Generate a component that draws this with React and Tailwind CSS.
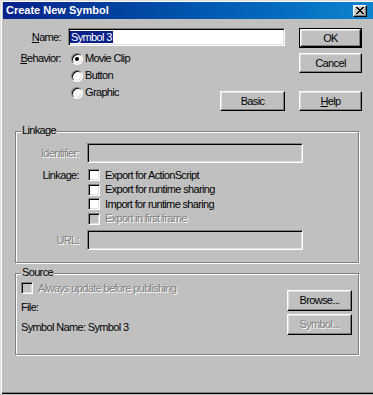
import React from "react";

const raised =
  "bg-[#c0c0c0] border border-t-white border-l-white border-r-black border-b-black shadow-[inset_-1px_-1px_#808080,inset_1px_1px_#dfdfdf]";
const sunken =
  "border border-t-[#808080] border-l-[#808080] border-r-white border-b-white shadow-[inset_1px_1px_#000,inset_-1px_-1px_#dfdfdf]";
const dis = "text-[#808080] [text-shadow:1px_1px_0_#fff]";

function Btn({ children, className = "", disabled, def }) {
  if (def) {
    return (
      <div className={`border border-black ${className}`}>
        <div className={`${raised} h-full flex items-center justify-center`}>{children}</div>
      </div>
    );
  }
  return (
    <div className={`${raised} flex items-center justify-center ${disabled ? dis : ""} ${className}`}>
      {children}
    </div>
  );
}

function Radio({ checked, label }) {
  return (
    <div className="flex items-center h-[17px]">
      <div className="w-[12px] h-[12px] rounded-full bg-white border border-t-[#808080] border-l-[#808080] border-r-white border-b-white shadow-[inset_1px_1px_#000,inset_-1px_-1px_#dfdfdf] flex items-center justify-center">
        {checked && <div className="w-[4px] h-[4px] rounded-full bg-black" />}
      </div>
      <span className="ml-[2px]">{label}</span>
    </div>
  );
}

function Check({ label, disabled, h = "h-[14.5px]" }) {
  return (
    <div className={`flex items-center ${h}`}>
      <div className={`w-[12px] h-[12px] ${sunken} ${disabled ? "bg-[#c0c0c0]" : "bg-white"}`} />
      <span className={`ml-[5px] ${disabled ? dis : ""}`}>{label}</span>
    </div>
  );
}

function Group({ title, className = "", children }) {
  return (
    <div
      className={`relative ml-[15px] w-[344px] border border-[#808080] shadow-[inset_1px_1px_#fff,1px_1px_#fff] ${className}`}
    >
      <span className="absolute left-[5px] top-[-8px] h-[13px] leading-[13px] px-[1px] bg-[#c0c0c0]">
        {title}
      </span>
      {children}
    </div>
  );
}

export default function App() {
  return (
    <div className="w-[373px] h-[395px] bg-[#c0c0c0] overflow-hidden text-[11px] leading-[13px] tracking-[-0.65px] text-black font-['Liberation_Sans',Arial,sans-serif]">
      <div className="h-[394px] pt-[2px] shadow-[inset_1px_1px_#dfdfdf,inset_2px_2px_#fff,inset_0_-1px_#000,inset_0_-2px_#808080]">
        {/* Title bar */}
        <div className="ml-[3px] h-[17px] flex items-center justify-between pl-[3px] pr-[6px] bg-gradient-to-r from-[#08218a] to-[#1084d0]">
          <span className="text-white font-bold text-[11px] tracking-normal">Create New Symbol</span>
          <div className={`${raised} w-[14px] h-[12px] flex items-center justify-center`}>
            <svg width="8" height="7" viewBox="0 0 8 7" shapeRendering="crispEdges">
              <path
                fill="#000"
                d="M0 0h2v1H0z M6 0h2v1H6z M1 1h2v1H1z M5 1h2v1H5z M2 2h4v1H2z M3 3h2v1H3z M2 4h4v1H2z M1 5h2v1H1z M5 5h2v1H5z M0 6h2v1H0z M6 6h2v1H6z"
              />
            </svg>
          </div>
        </div>

        {/* Top section */}
        <div className="flex mt-[9px]">
          <div className="w-[285px]">
            <div className="flex items-center h-[18px]">
              <div className="w-[61px] text-right">
                <span className="underline">N</span>ame:
              </div>
              <div className={`ml-[7px] w-[217px] h-[18px] bg-white ${sunken} flex items-center pl-[1px]`}>
                <span className="bg-[#08218a] text-white px-[1px] leading-[12px]">Symbol 3</span>
              </div>
            </div>
            <div className="flex items-start mt-[4px]">
              <div className="w-[61px] text-right h-[17px] leading-[17px]">
                <span className="underline">B</span>ehavior:
              </div>
              <div className="ml-[10px] flex flex-col">
                <Radio checked label="Movie Clip" />
                <Radio label="Button" />
                <Radio label="Graphic" />
              </div>
              <Btn className="ml-auto mt-[41px] w-[65px] h-[20px]">Basic</Btn>
            </div>
          </div>
          <div className="ml-[14px] flex flex-col w-[63px]">
            <Btn def className="h-[20px]">OK</Btn>
            <Btn className="mt-[5px] h-[20px]">Cancel</Btn>
            <Btn className="mt-[18px] h-[20px]">
              <span>
                <span className="underline">H</span>elp
              </span>
            </Btn>
          </div>
        </div>

        {/* Linkage */}
        <Group title="Linkage" className="mt-[20px] h-[132px]">
          <div className="flex items-center mt-[11px]">
            <div className={`w-[63px] text-right ${dis}`}>Identifier:</div>
            <div className={`ml-[8px] w-[216px] h-[20px] ${sunken}`} />
          </div>
          <div className="flex items-start mt-[5px]">
            <div className="w-[63px] text-right h-[14.5px] leading-[14.5px]">Linkage:</div>
            <div className="ml-[9px] flex flex-col">
              <Check label="Export for ActionScript" />
              <Check label="Export for runtime sharing" />
              <Check label="Import for runtime sharing" />
              <Check label="Export in first frame" disabled />
            </div>
          </div>
          <div className="flex items-center mt-[4px]">
            <div className={`w-[63px] text-right ${dis}`}>URL:</div>
            <div className={`ml-[8px] w-[216px] h-[20px] ${sunken}`} />
          </div>
        </Group>

        {/* Source */}
        <Group title="Source" className="mt-[10px] h-[82px]">
          <div className="flex">
            <div className="pl-[5px] flex flex-col">
              <div className="mt-[8px]">
                <Check label="Always update before publishing" disabled h="h-[12px]" />
              </div>
              <div className="mt-[7px] h-[13px]">File:</div>
              <div className="mt-[7px] h-[13px]">Symbol Name: Symbol 3</div>
            </div>
            <div className="ml-auto mr-[6px] flex flex-col w-[65px]">
              <Btn className="mt-[16px] h-[21px]">Browse...</Btn>
              <Btn disabled className="mt-[3px] h-[21px]">Symbol...</Btn>
            </div>
          </div>
        </Group>
      </div>
    </div>
  );
}
